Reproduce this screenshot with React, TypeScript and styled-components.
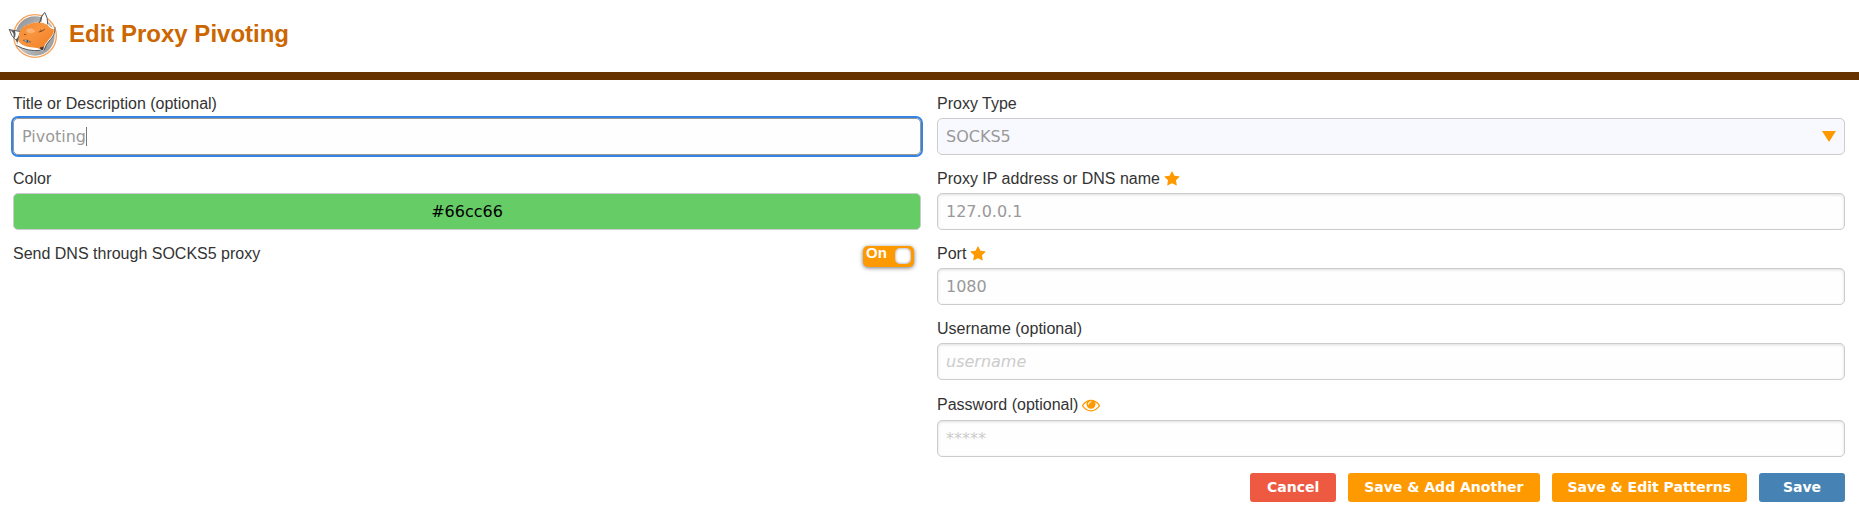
import React, { useEffect, useRef, useState } from "react";
import styled, { createGlobalStyle, css } from "styled-components";

const GlobalStyle = createGlobalStyle`
  *, *::before, *::after {
    box-sizing: border-box;
  }
  body {
    margin: 0;
    background: #fff;
    color: #333;
    font: 16px/24px "Liberation Sans", Arial, sans-serif;
  }
`;

const Header = styled.header`
  display: flex;
  align-items: center;
  gap: 11px;
  height: 80px;
  padding: 0 8px 2px;
  border-bottom: 8px solid #630;
`;

const Logo = styled.svg`
  width: 50px;
  height: 48px;
`;

const Title = styled.h1`
  margin: 0;
  padding-bottom: 2px;
  color: #c60;
  font-size: 24px;
  line-height: 32px;
`;

const Form = styled.form`
  padding: 12px 14px 16px 13px;
`;

const Columns = styled.div`
  display: grid;
  grid-template-columns: 1fr 1fr;
  gap: 16px;
`;

const Column = styled.div`
  display: flex;
  flex-direction: column;
  gap: 12px;
`;

const Field = styled.div`
  display: flex;
  flex-direction: column;
  gap: 2px;
`;

const LabelRow = styled.div`
  display: flex;
  align-items: center;
  gap: 4px;
`;

const control = css`
  display: block;
  width: 100%;
  height: 37px;
  padding: 0 8px;
  border: 1px solid #ccc;
  border-radius: 5px;
  color: #999;
  font: 16px "DejaVu Sans", sans-serif;
`;

const TextInput = styled.input`
  ${control}
  background: #fefefe;
  box-shadow: inset 0 1px 3px #ddd;

  &::placeholder {
    color: #ccc;
    font-style: italic;
    opacity: 1;
  }
  &:focus {
    border-color: #999;
    outline: 2px solid #3584e4;
    outline-offset: 0;
    box-shadow: none;
  }
`;

const PasswordInput = styled(TextInput)`
  &::placeholder {
    font-style: normal;
  }
`;

const ColorInput = styled(TextInput)<{ $color: string }>`
  background: ${(p) => p.$color};
  box-shadow: none;
  color: #000;
  text-align: center;
`;

const ControlWrap = styled.div`
  position: relative;
`;

const TitleInput = styled(TextInput)`
  caret-color: transparent;
`;

const Caret = styled.span`
  position: absolute;
  top: 9px;
  width: 1px;
  height: 19px;
  background: #777;
  pointer-events: none;
`;

const Select = styled.select`
  ${control}
  appearance: none;
  background: #f8f8ff;
`;

const Arrow = styled.svg`
  position: absolute;
  top: 13px;
  right: 9px;
  width: 14px;
  height: 11px;
  fill: #f90;
  pointer-events: none;
`;

const IconSvg = styled.svg<{ $size: number }>`
  display: block;
  width: ${(p) => p.$size}px;
  height: ${(p) => p.$size}px;
  fill: #f90;
`;

const IconButton = styled.button`
  display: flex;
  align-items: center;
  height: 26px;
  padding: 0;
  border: 0;
  background: none;
  cursor: pointer;
`;

const SwitchRow = styled.div`
  display: flex;
  justify-content: space-between;
  align-items: flex-start;
  padding-right: 7px;
`;

const Switch = styled.label`
  display: flex;
  justify-content: space-between;
  width: 51px;
  height: 21px;
  margin-top: 4px;
  padding: 2px 3px;
  border-radius: 5px;
  background: #f90;
  box-shadow: 0 1px 4px #777;
  color: #fff;
  font-size: 15px;
  font-weight: bold;
  line-height: 10px;
  cursor: pointer;
`;

const Knob = styled.input`
  appearance: none;
  width: 16px;
  height: 16px;
  margin: 0;
  border-radius: 5px;
  background: #fff;
  box-shadow: inset 0 0 3px #888;
`;

const Actions = styled.div`
  display: flex;
  justify-content: flex-end;
  gap: 12px;
  padding-top: 16px;
`;

const tones = { danger: "#ee5941", accent: "#f90", primary: "#4682b4" };

const Button = styled.button<{ $tone: keyof typeof tones }>`
  min-width: 86px;
  height: 29px;
  padding: 0 16px 1px;
  border: 0;
  border-radius: 3px;
  background: ${(p) => tones[p.$tone]};
  color: #fff;
  font: bold 14px "DejaVu Sans", sans-serif;
  cursor: pointer;
`;

const Star = () => (
  <IconSvg $size={16} viewBox="0 0 1792 1792" aria-hidden="true">
    <path d="M1728 647q0 22-26 48l-363 354 86 500q1 7 1 20 0 21-10.5 35.5t-30.5 14.5q-19 0-40-12l-449-236-449 236q-22 12-40 12-21 0-31.5-14.5t-10.5-35.5q0-6 2-20l86-500-364-354q-25-27-25-48 0-37 56-46l502-73 225-455q19-41 49-41t49 41l225 455 502 73q56 9 56 46z" />
  </IconSvg>
);

const Eye = () => (
  <IconSvg $size={18} viewBox="0 0 1792 1792" aria-hidden="true">
    <path d="M1664 960q-152-236-381-353 61 104 61 225 0 185-131.5 316.5t-316.5 131.5-316.5-131.5-131.5-316.5q0-121 61-225-229 117-381 353 133 205 333.5 326.5t434.5 121.5 434.5-121.5 333.5-326.5zm-720-384q0-20-14-34t-34-14q-125 0-214.5 89.5t-89.5 214.5q0 20 14 34t34 14 34-14 14-34q0-86 61-147t147-61q20 0 34-14t14-34zm848 384q0 34-20 69-140 230-376.5 368.5t-499.5 138.5-499.5-139-376.5-368q-20-35-20-69t20-69q140-229 376.5-368t499.5-139 499.5 139 376.5 368q20 35 20 69z" />
  </IconSvg>
);

const FoxLogo = () => (
  <Logo viewBox="24 33 150 144" aria-hidden="true">
    <defs>
      <linearGradient id="disc" x1="0" y1="0" x2="1" y2="1">
        <stop offset="0" stopColor="#85878a" />
        <stop offset="0.5" stopColor="#bfc0c2" />
        <stop offset="1" stopColor="#8e9093" />
      </linearGradient>
      <linearGradient id="fur" x1="0" y1="0" x2="1" y2="1">
        <stop offset="0" stopColor="#f4892d" />
        <stop offset="0.4" stopColor="#f9953f" />
        <stop offset="1" stopColor="#f07c22" />
      </linearGradient>
    </defs>
    <circle cx="105" cy="108" r="64" fill="#fff" stroke="#f8a257" strokeWidth="4" />
    <circle cx="105" cy="108" r="59" fill="url(#disc)" />
    <path d="M28 89L61 93Q72 75 93 72Q106 65 117 68Q122 47 134 37Q143 46 144 73Q155 87 165 83Q166 106 152 118Q138 130 130 151Q84 157 50 136Q55 128 54 124L45 120Q33 108 28 89Z" fill="#fff" />
    <path d="M57 100Q64 77 93 71Q122 61 143 75Q152 88 162 88Q161 105 148 117Q135 130 128 150Q110 141 91 142Q67 139 55 124Z" fill="url(#fur)" />
    <path d="M77 91Q93 77 106 93Q97 104 84 98Z" fill="#fbb272" />
    <path d="M28 89L59 94M28 89Q33 108 46 119M118 68Q122 47 134 37M136 40Q144 53 143 72M50 137Q86 156 121 151M133 150Q138 131 152 118Q165 106 165 83" fill="none" stroke="#58595b" strokeWidth="3" strokeLinecap="round" />
    <path d="M30 90L45 93Q49 104 45 113L40 110Q45 101 30 90ZM132 40Q119 51 120 65L124 65Q124 51 132 40ZM57 104Q54 114 46 119L52 127Q57 120 57 104Z" fill="#58595b" />
    <path d="M70 121Q81 117 92 126Q79 131 70 121Z" fill="#fff" stroke="#4b4140" strokeWidth="2" />
    <circle cx="82" cy="124" r="3" fill="#3d3d3f" />
    <path d="M73 103L77 104M117 96Q126 95 134 88M122 90L124 93" fill="none" stroke="#814d2a" strokeWidth="3" strokeLinecap="round" />
    <path d="M120 141Q126 144 131 138L130 149L125 151Q119 149 120 141Z" fill="#3d3d3f" />
  </Logo>
);

interface TextFieldProps {
  id: string;
  label: string;
  required?: boolean;
  defaultValue?: string;
  placeholder?: string;
}

const TextField = ({ id, label, required, ...input }: TextFieldProps) => (
  <Field>
    <LabelRow>
      <label htmlFor={id}>{label}</label>
      {required && <Star />}
    </LabelRow>
    <TextInput id={id} type="text" required={required} {...input} />
  </Field>
);

/* Text box that draws its own thin insertion bar while it has the focus. */
const TitleField = () => {
  const ref = useRef<HTMLInputElement>(null);
  const [caret, setCaret] = useState<number | null>(null);

  const placeCaret = () => {
    const input = ref.current;
    const pen = document.createElement("canvas").getContext("2d");
    if (!input || !pen) return;
    const style = getComputedStyle(input);
    pen.font = `${style.fontSize} ${style.fontFamily}`;
    const before = input.value.slice(0, input.selectionStart ?? input.value.length);
    const inset = parseFloat(style.paddingLeft) + parseFloat(style.borderLeftWidth);
    setCaret(Math.round(inset + pen.measureText(before).width - input.scrollLeft));
  };

  useEffect(() => {
    const input = ref.current;
    if (!input) return;
    input.focus();
    input.setSelectionRange(input.value.length, input.value.length);
    placeCaret();
  }, []);

  return (
    <Field>
      <label htmlFor="title">Title or Description (optional)</label>
      <ControlWrap>
        <TitleInput
          id="title"
          type="text"
          ref={ref}
          defaultValue="Pivoting"
          onSelect={placeCaret}
          onInput={placeCaret}
          onBlur={() => setCaret(null)}
        />
        {caret !== null && <Caret style={{ left: caret }} />}
      </ControlWrap>
    </Field>
  );
};

export default function App() {
  const [color, setColor] = useState("#66cc66");
  const [proxyDns, setProxyDns] = useState(true);
  const [showPassword, setShowPassword] = useState(false);

  return (
    <>
      <GlobalStyle />
      <Header>
        <FoxLogo />
        <Title>Edit Proxy Pivoting</Title>
      </Header>
      <Form onSubmit={(e) => e.preventDefault()}>
        <Columns>
          <Column>
            <TitleField />
            <Field>
              <label htmlFor="color">Color</label>
              <ColorInput id="color" type="text" $color={color} value={color} onChange={(e) => setColor(e.target.value)} />
            </Field>
            <SwitchRow>
              <label htmlFor="proxy-dns">Send DNS through SOCKS5 proxy</label>
              <Switch>
                {proxyDns ? "On" : "Off"}
                <Knob id="proxy-dns" type="checkbox" checked={proxyDns} onChange={(e) => setProxyDns(e.target.checked)} />
              </Switch>
            </SwitchRow>
          </Column>
          <Column>
            <Field>
              <label htmlFor="type">Proxy Type</label>
              <ControlWrap>
                <Select id="type" defaultValue="SOCKS5">
                  <option>SOCKS5</option>
                </Select>
                <Arrow viewBox="0 0 14 11" aria-hidden="true">
                  <path d="M0 0H14L7 11Z" />
                </Arrow>
              </ControlWrap>
            </Field>
            <TextField id="address" label="Proxy IP address or DNS name" required defaultValue="127.0.0.1" />
            <TextField id="port" label="Port" required defaultValue="1080" />
            <TextField id="username" label="Username (optional)" placeholder="username" />
            <Field>
              <LabelRow>
                <label htmlFor="password">Password (optional)</label>
                <IconButton type="button" aria-label="Show password" onClick={() => setShowPassword(!showPassword)}>
                  <Eye />
                </IconButton>
              </LabelRow>
              <PasswordInput id="password" type={showPassword ? "text" : "password"} placeholder="*****" />
            </Field>
          </Column>
        </Columns>
        <Actions>
          <Button type="button" $tone="danger">Cancel</Button>
          <Button type="button" $tone="accent">Save &amp; Add Another</Button>
          <Button type="button" $tone="accent">Save &amp; Edit Patterns</Button>
          <Button type="submit" $tone="primary">Save</Button>
        </Actions>
      </Form>
    </>
  );
}
